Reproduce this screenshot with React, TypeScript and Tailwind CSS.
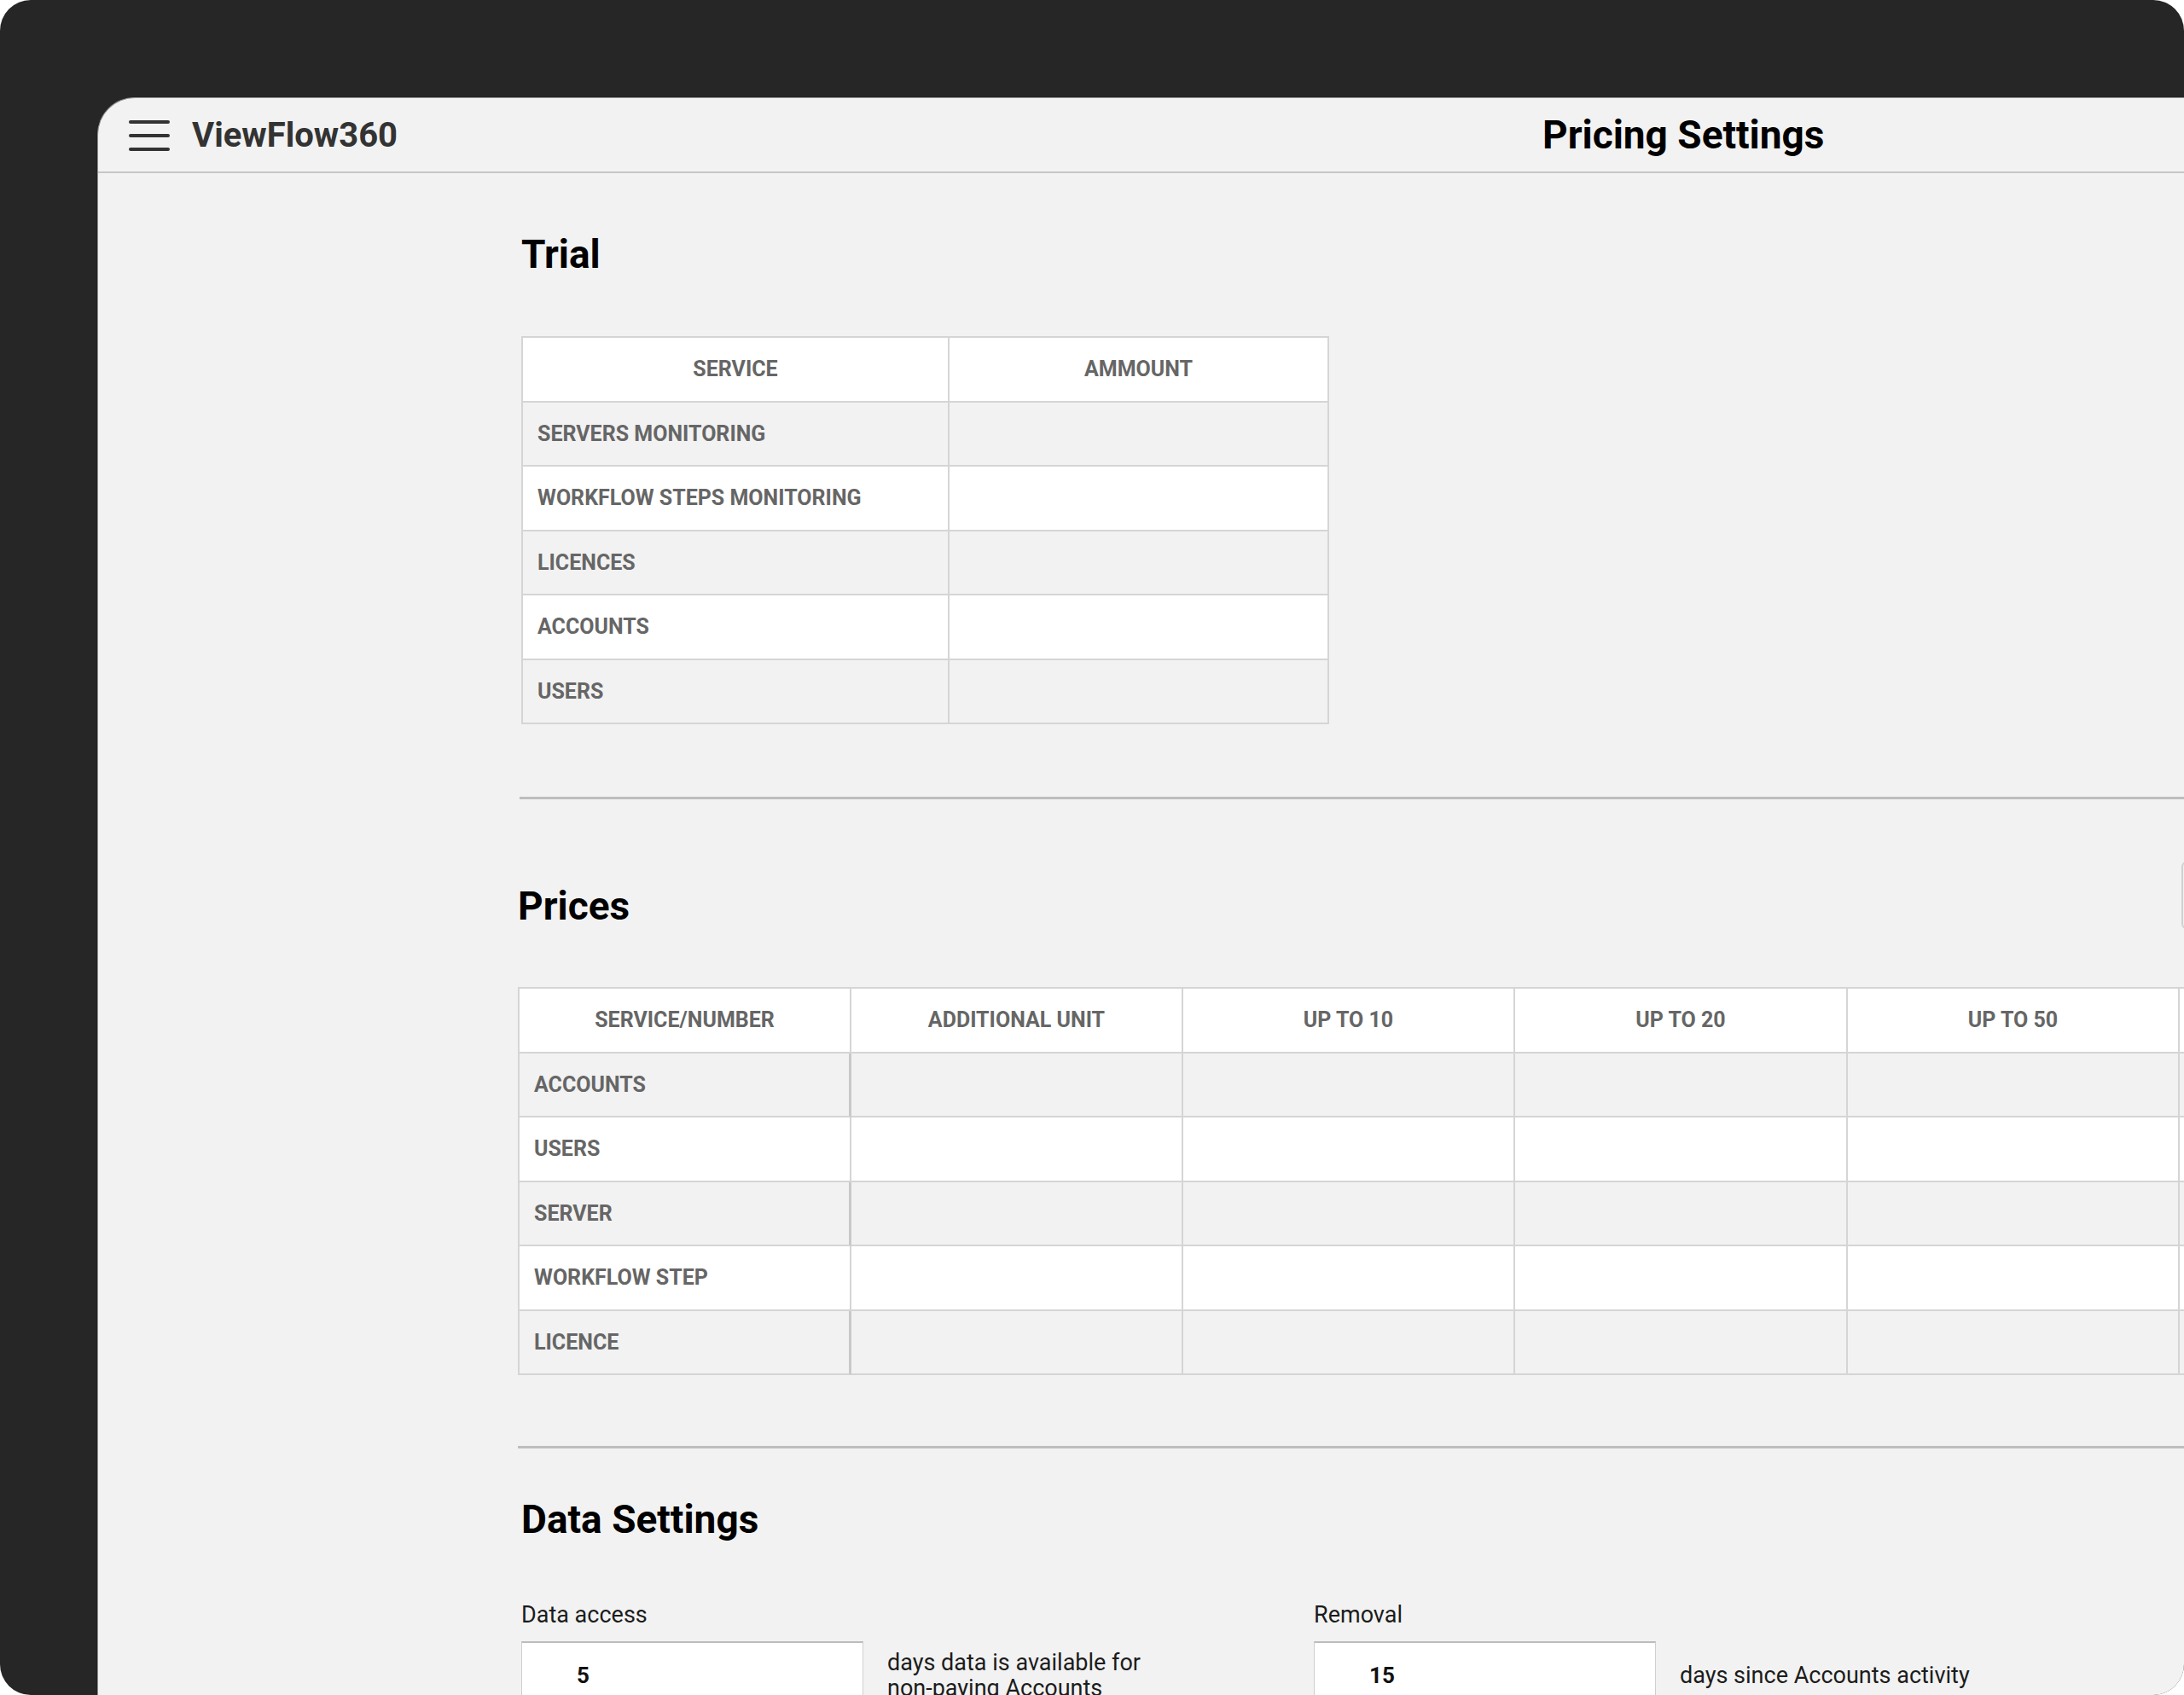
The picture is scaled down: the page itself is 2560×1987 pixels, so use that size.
import React from "react";

const trialRows = [
  "SERVERS MONITORING",
  "WORKFLOW STEPS MONITORING",
  "LICENCES",
  "ACCOUNTS",
  "USERS",
];

// last column runs past the screen edge, so its label is never visible
const priceCols = ["SERVICE/NUMBER", "ADDITIONAL UNIT", "UP TO 10", "UP TO 20", "UP TO 50", ""];

const priceRows = ["ACCOUNTS", "USERS", "SERVER", "WORKFLOW STEP", "LICENCE"];

function Hamburger() {
  return (
    <svg width="48" height="38" viewBox="0 0 48 38" className="shrink-0">
      <g stroke="#333333" strokeWidth="4" strokeLinecap="round">
        <line x1="2" y1="3" x2="46" y2="3" />
        <line x1="2" y1="19" x2="46" y2="19" />
        <line x1="2" y1="35" x2="46" y2="35" />
      </g>
    </svg>
  );
}

function SectionTitle({ children, className = "" }: { children: React.ReactNode; className?: string }) {
  return (
    <h2 className={`text-[46px] leading-none font-bold text-black ${className}`}>
      {children}
    </h2>
  );
}

function TrialTable() {
  return (
    <div className="grid grid-cols-[500px_445px] w-fit border-l-2 border-t-2 border-[#d5d5d5] text-[25px] font-bold text-[#666666]">
      <div className="h-[75.5px] flex items-center justify-center bg-white border-r-2 border-b-2 border-[#d5d5d5]">
        SERVICE
      </div>
      <div className="h-[75.5px] flex items-center justify-center bg-white border-r-2 border-b-2 border-[#d5d5d5]">
        AMMOUNT
      </div>
      {trialRows.map((r, i) => (
        <React.Fragment key={r}>
          <div
            className={`h-[75.5px] flex items-center pl-[17px] border-r-2 border-b-2 border-[#d5d5d5] ${
              i % 2 === 0 ? "bg-[#f2f2f2]" : "bg-white"
            }`}
          >
            {r}
          </div>
          <div
            className={`h-[75.5px] border-r-2 border-b-2 border-[#d5d5d5] ${
              i % 2 === 0 ? "bg-[#f2f2f2]" : "bg-white"
            }`}
          />
        </React.Fragment>
      ))}
    </div>
  );
}

function PricesTable() {
  return (
    <div className="grid grid-cols-[389px_389px_389px_390px_389px_389px] w-max border-l-2 border-t-2 border-[#d5d5d5] text-[25px] font-bold text-[#666666]">
      {priceCols.map((c, i) => (
        <div
          key={i}
          className="h-[75.5px] flex items-center justify-center bg-white border-r-2 border-b-2 border-[#d5d5d5]"
        >
          {c}
        </div>
      ))}
      {priceRows.map((r, i) => (
        <React.Fragment key={r}>
          <div
            className={`h-[75.5px] flex items-center pl-[17px] border-b-2 border-[#d5d5d5] ${
              i % 2 === 0
                ? "bg-[#f2f2f2] border-r-[3px] border-r-[#c9c9c9]"
                : "bg-white border-r-2"
            }`}
          >
            {r}
          </div>
          {priceCols.slice(1).map((_, j) => (
            <div
              key={j}
              className={`h-[75.5px] border-r-2 border-b-2 border-[#d5d5d5] ${
                i % 2 === 0 ? "bg-[#f2f2f2]" : "bg-white"
              }`}
            />
          ))}
        </React.Fragment>
      ))}
    </div>
  );
}

function DayField({
  label,
  value,
  text,
  className = "",
}: {
  label: string;
  value: string;
  text: string;
  className?: string;
}) {
  return (
    <div className={className}>
      <div className="text-[27px] leading-none text-[#1c1c1c]">{label}</div>
      <div className="mt-[17px] flex items-center gap-[28px]">
        <div className="w-[401px] h-[80px] shrink-0 flex items-center pl-[64px] bg-white border border-[#cfcfcf] border-t-2 border-t-[#bcbcbc] text-[26px] font-bold text-[#111111]">
          {value}
        </div>
        <div className="w-[340px] text-[27px] leading-[30px] text-[#1c1c1c]">{text}</div>
      </div>
    </div>
  );
}

export default function App() {
  return (
    <div className="min-h-screen bg-white font-[Roboto,sans-serif]">
      <div className="w-[2560px] h-[1987px] rounded-[36px] bg-[#262626] pt-[114px] pl-[114px] overflow-hidden">
        <div className="h-full bg-[#f2f2f2] rounded-tl-[44px] border-l border-t border-[#8e8e8e] overflow-hidden">
          {/* Header */}
          <header className="flex items-center h-[88px] border-b-2 border-[#c6c6c6]">
            <div className="w-[1693px] shrink-0 flex items-center gap-[26px] pl-[36px] pt-[2px]">
              <Hamburger />
              <span className="text-[40px] font-bold text-[#333333] leading-none">ViewFlow360</span>
            </div>
            <h1 className="text-[46px] font-bold text-black leading-none whitespace-nowrap">
              Pricing Settings
            </h1>
          </header>

          <main className="pl-[492px]">
            {/* Trial */}
            <SectionTitle className="mt-[72px] ml-[4px]">Trial</SectionTitle>
            <div className="mt-[73px] ml-[4px]">
              <TrialTable />
            </div>

            <div className="mt-[85px] ml-[2px] h-[3px] bg-[#bebebe]" />

            {/* Prices */}
            <div className="mt-[73px] grid grid-cols-[1950px_auto] items-start">
              <SectionTitle className="mt-[29px]">Prices</SectionTitle>
              <div className="w-[200px] h-[79px] rounded-[6px] border-2 border-[#d0d0d0]" />
            </div>
            <div className="mt-[68px]">
              <PricesTable />
            </div>

            <div className="mt-[83px] h-[3px] bg-[#bebebe]" />

            {/* Data Settings */}
            <SectionTitle className="mt-[60px] ml-[4px]">Data Settings</SectionTitle>
            <div className="mt-[76px] flex">
              <DayField
                className="w-[929px] ml-[4px]"
                label="Data access"
                value="5"
                text="days data is available for non-paying Accounts"
              />
              <DayField label="Removal" value="15" text="days since Accounts activity" />
            </div>
          </main>
        </div>
      </div>
    </div>
  );
}
